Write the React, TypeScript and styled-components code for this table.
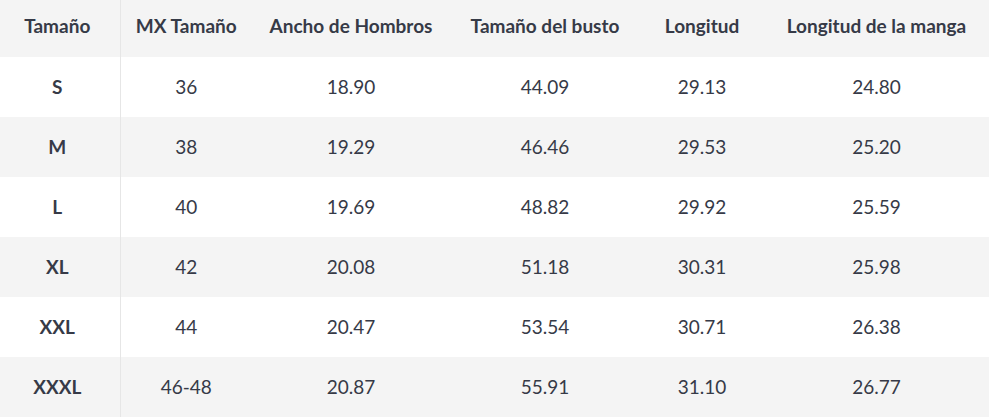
import React from "react";
import styled, { createGlobalStyle } from "styled-components";

const Global = createGlobalStyle`
  html, body { margin: 0; padding: 0; background: #ffffff; }
  body { font-family: Lato, "Open Sans", sans-serif; color: #363a47; }
`;

const Table = styled.table`
  width: 989px;
  border-collapse: collapse;
  table-layout: fixed;
`;

const Col = styled.col<{ $w: number }>`
  width: ${(p) => p.$w}px;
`;

const HeadRow = styled.tr`
  background: #f4f4f4;
  height: 57px;
`;

const BodyRow = styled.tr<{ $alt: boolean }>`
  background: ${(p) => (p.$alt ? "#f4f4f4" : "#ffffff")};
  height: 60px;
`;

const Th = styled.th<{ $first?: boolean }>`
  font-size: 19px;
  font-weight: 700;
  text-align: center;
  padding: 0 ${(p) => (p.$first ? "5px" : "0")} 6px 0;
  color: #363a47;
  white-space: nowrap;
  border-right: ${(p) => (p.$first ? "1px solid #e6e6e6" : "none")};
`;

const Td = styled.td<{ $first?: boolean }>`
  font-size: 19px;
  font-weight: ${(p) => (p.$first ? 700 : 400)};
  text-align: center;
  padding: 0 ${(p) => (p.$first ? "5px" : "0")} 2px 0;
  color: #363a47;
  white-space: nowrap;
  border-right: ${(p) => (p.$first ? "1px solid #e6e6e6" : "none")};
`;

const headers = [
  "Tamaño",
  "MX Tamaño",
  "Ancho de Hombros",
  "Tamaño del busto",
  "Longitud",
  "Longitud de la manga",
];

const widths = [120, 132, 198, 190, 124, 225];

const rows = [
  ["S", "36", "18.90", "44.09", "29.13", "24.80"],
  ["M", "38", "19.29", "46.46", "29.53", "25.20"],
  ["L", "40", "19.69", "48.82", "29.92", "25.59"],
  ["XL", "42", "20.08", "51.18", "30.31", "25.98"],
  ["XXL", "44", "20.47", "53.54", "30.71", "26.38"],
  ["XXXL", "46-48", "20.87", "55.91", "31.10", "26.77"],
];

export default function App() {
  return (
    <>
      <Global />
      <Table>
        <colgroup>
          {widths.map((w, i) => (
            <Col key={i} $w={w} />
          ))}
        </colgroup>
        <thead>
          <HeadRow>
            {headers.map((h, i) => (
              <Th key={h} $first={i === 0}>
                {h}
              </Th>
            ))}
          </HeadRow>
        </thead>
        <tbody>
          {rows.map((r, ri) => (
            <BodyRow key={r[0]} $alt={ri % 2 === 1}>
              {r.map((c, ci) => (
                <Td key={ci} $first={ci === 0}>
                  {c}
                </Td>
              ))}
            </BodyRow>
          ))}
        </tbody>
      </Table>
    </>
  );
}
